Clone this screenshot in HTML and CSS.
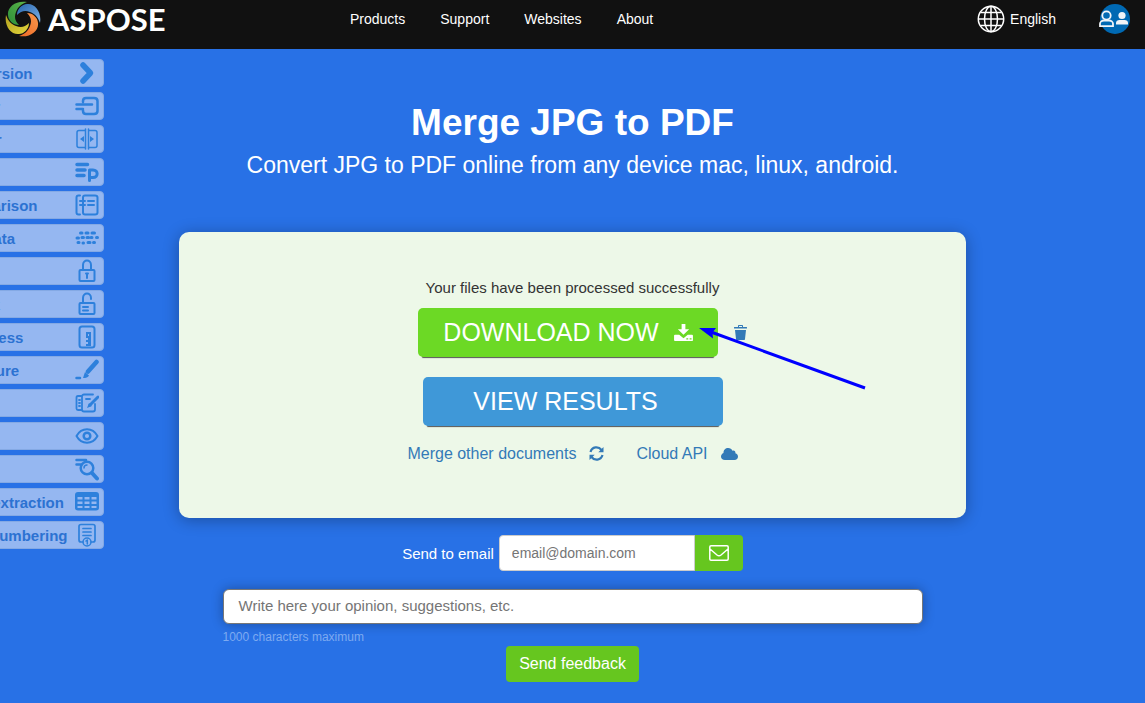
FILE: index.html
```html
<!DOCTYPE html>
<html lang="en">
<head>
<meta charset="utf-8">
<meta name="viewport" content="width=device-width, initial-scale=1">
<title>Merge JPG to PDF</title>
<link rel="stylesheet" href="styles.css">
</head>
<body>
<header class="topbar">
  <a class="brand" href="#">
    <svg class="brand-mark" viewBox="0 0 36 36" aria-hidden="true">
      <defs>
        <linearGradient id="g1" x1="0" y1="1" x2="1" y2="0"><stop offset="0" stop-color="#2c8f3a"/><stop offset="1" stop-color="#5fb548"/></linearGradient>
        <linearGradient id="g2" x1="0" y1="1" x2="1" y2="0"><stop offset="0" stop-color="#2565ad"/><stop offset="1" stop-color="#7fb2e8"/></linearGradient>
        <linearGradient id="g3" x1="0" y1="1" x2="1" y2="0"><stop offset="0" stop-color="#f9974d"/><stop offset="1" stop-color="#ee6a24"/></linearGradient>
        <linearGradient id="g4" x1="0" y1="1" x2="1" y2="0"><stop offset="0" stop-color="#e3d63c"/><stop offset="1" stop-color="#b3a11e"/></linearGradient>
      </defs>
      <path fill="url(#g1)" d="M22 1C11-1 2 6 3 14c0 5 5 10 11 10-4-4-5-8-3-13 2-5 5-8 11-10z"/>
      <path fill="url(#g2)" transform="rotate(90 18 18)" d="M22 1C11-1 2 6 3 14c0 5 5 10 11 10-4-4-5-8-3-13 2-5 5-8 11-10z"/>
      <path fill="url(#g3)" transform="rotate(180 18 18)" d="M22 1C11-1 2 6 3 14c0 5 5 10 11 10-4-4-5-8-3-13 2-5 5-8 11-10z"/>
      <path fill="url(#g4)" transform="rotate(270 18 18)" d="M22 1C11-1 2 6 3 14c0 5 5 10 11 10-4-4-5-8-3-13 2-5 5-8 11-10z"/>
    </svg>
    <span class="brand-name">ASPOSE</span>
  </a>
  <nav class="main-nav" aria-label="Main">
    <a href="#">Products</a>
    <a href="#">Support</a>
    <a href="#">Websites</a>
    <a href="#">About</a>
  </nav>
  <div class="account">
    <a class="language" href="#">
      <svg class="globe" viewBox="0 0 28 28" aria-hidden="true"><circle cx="14" cy="14" r="12.7"/><ellipse cx="14" cy="14" rx="6.5" ry="12.7"/><path d="M14 1v26M1 14h26M3.500 7.500h21M3.500 20.500h21"/></svg>
      <span>English</span>
    </a>
    <a class="profile" href="#" aria-label="Account">
      <svg viewBox="0 0 32 30" aria-hidden="true"><circle cx="17" cy="15" r="15" fill="#0069b3"/><g fill="none" stroke="#f0f4f8" stroke-width="1.800"><circle cx="8.500" cy="11.500" r="4.200"/><path d="M2 22.200v-2.400c0-2 2-3.300 4-3.300h5c2 0 4 1.300 4 3.300v2.400z"/></g><g fill="#f0f4f8"><circle cx="24" cy="11.500" r="3.600"/><path d="M18 20.500v-1.500c0-2 1.500-3 3.500-3h5c2 0 3.500 1 3.500 3v1.500z"/></g></svg>
    </a>
  </div>
</header>

<div class="page">
  <nav class="tools" aria-label="Tools">
    <a href="#"><span>Conversion</span><svg viewBox="0 0 24 24"><path d="M8 4l7.500 8L8 20" stroke-width="5.500"/></svg></a>
    <a href="#"><span>Merger</span><svg viewBox="0 0 24 24"><path d="M8 8V7c0-2 1-3 3-3h8c2 0 3.500 1 3.500 3v10c0 2-1.500 3-3.500 3h-8c-2 0-3-1-3-3v-1M1.500 10.500H17M1.500 15H8" stroke-width="2.500"/></svg></a>
    <a href="#"><span>Splitter</span><svg viewBox="0 0 24 24"><path d="M9.500 3.500H4c-1.500 0-2 .5-2 2v13c0 1.500.5 2 2 2h5.500M14.500 3.500H20c1.500 0 2 .5 2 2v13c0 1.500-.5 2-2 2h-5.500M10.500 2v20M13.500 2v20" stroke-width="1.500"/><path class="solid" d="M5 12l4-3v6zM19 12l-4-3v6z"/></svg></a>
    <a href="#"><span>Parser</span><svg viewBox="0 0 24 24"><path d="M2 4.500h10.500M2 10h8M2 15.500h7" stroke-width="3.500"/><path d="M14.500 20.500V10H18c5.500 0 5.500 7.500 0 7.500h-3" stroke-width="3"/></svg></a>
    <a href="#"><span>Comparison</span><svg viewBox="0 0 24 24"><path d="M5 2.500H3.500c-1.500 0-2 .5-2 2v15c0 1.500.5 2 2 2H5M10 2.500h10c1.500 0 2.500.5 2.500 2v15c0 1.500-1 2-2.500 2H10c-1.500 0-2-.5-2-2v-15c0-1.500.5-2 2-2zM13 8h6M13 12h6M5 8h5M5 12h5"/></svg></a>
    <a href="#"><span>Metadata</span><svg viewBox="0 0 24 24"><path d="M5.500 7h1.500M11 7h2M17 7h2.500M2 12h1.500M7 11.500h1.500M12 11.500h1.500M16 11.500h1M21.500 11.500h1M3 16.500h1M8 17h.5M13 16.500h2M18.500 16.500h1" stroke-width="3"/></svg></a>
    <a href="#"><span>Lock</span><svg viewBox="0 0 24 24"><path d="M5.500 11h13c.7 0 1 .3 1 1v9c0 .7-.3 1-1 1h-13c-.7 0-1-.3-1-1v-9c0-.7.300-1 1-1zM8 11V6c0-6 8-6 8 0v5M12 15v4M11 14.500h2"/></svg></a>
    <a href="#"><span>Unlock</span><svg viewBox="0 0 24 24"><path d="M5.500 11h13c.7 0 1 .3 1 1v9c0 .7-.3 1-1 1h-13c-.7 0-1-.3-1-1v-9c0-.7.300-1 1-1zM8 11V6c0-6 8-6 8 0v1M8 15h5M8 18.500h5"/></svg></a>
    <a href="#"><span>Compress</span><svg viewBox="0 0 24 24"><path d="M7 1.500h10c2 0 2.500 1 2.500 2.500v16c0 1.500-.5 2.500-2.500 2.500H7c-2 0-2.500-1-2.500-2.500V4c0-1.500.5-2.500 2.500-2.500z"/><path class="solid" d="M11 7h5v14h-5v-2h2v-2h-2v-2h2v-2h-2zM13 9v2h1V9z" fill-rule="evenodd"/></svg></a>
    <a href="#"><span>Signature</span><svg viewBox="0 0 24 24"><path d="M1.500 20h3.500" stroke-width="2.500"/><path d="M13 13.500l8.500-9.500" stroke-width="4.500"/><path class="solid" d="M10 14l4 3.500c-1 2-3 2.500-6 2.500z"/></svg></a>
    <a href="#"><span>Editor</span><svg viewBox="0 0 24 24"><path d="M6 5H3C1.800 5 1.500 5.500 1.500 6.500v11C1.500 18.500 2 19 3 19h3M18 3.500H9c-1 0-2 .5-2 2v13c0 1.500 1 2 2 2h9c1 0 2-.5 2-2V13M11 8h4M4 9h1M4 12h1M4 15h1" stroke-width="1.800"/><path d="M15 14l8-8" stroke-width="3"/><path class="solid" d="M12 17l2-5 3 3z"/></svg></a>
    <a href="#"><span>Viewer</span><svg viewBox="0 0 24 24"><path d="M1.500 12c5-9 16-9 21 0-5 9-16 9-21 0z"/><circle cx="12" cy="12" r="3.300" stroke-width="2.500"/></svg></a>
    <a href="#"><span>Search</span><svg viewBox="0 0 24 24"><path d="M1.500 3H11M1.500 7.500H6" stroke-width="2.500"/><circle cx="12" cy="11" r="6.300" stroke-width="2.500"/><path d="M17 16l5 5.500" stroke-width="4"/><path d="M9 11c0-2 1-3 3-3" stroke-width="1.500"/></svg></a>
    <a href="#"><span>Table extraction</span><svg viewBox="0 0 24 24"><path class="solid" fill-rule="evenodd" d="M3 2h18c2 0 3 1 3 3v13c0 1.500-1 2.500-3 2.500H3c-2 0-3-1-3-2.500V5c0-2 1-3 3-3zM2.500 7v2.500h5V7zM9.500 7v2.500h5V7zM16.500 7v2.500h5V7zM2.500 11.500V14h5v-2.500zM9.500 11.500V14h5v-2.500zM16.500 11.500V14h5v-2.500zM2.500 16v2h5v-2zM9.500 16v2h5v-2zM16.500 16v2h5v-2z"/></svg></a>
    <a href="#"><span>Page numbering</span><svg viewBox="0 0 24 24"><path d="M8 19H6c-1.500 0-2-1-2-2V3.500C4 2 5 1.500 6 1.500h12c1 0 2 .5 2 2V17c0 1-.5 2-2 2h-2M8 5.500h8M8 9h8M8 12.500h8" stroke-width="1.700"/><circle cx="12" cy="19" r="4" stroke-width="1.500"/><path d="M11 18l1.300-1v4" stroke-width="1.500"/></svg></a>
  </nav>

  <main class="content">
    <h1>Merge JPG to PDF</h1>
    <p class="lead">Convert JPG to PDF online from any device mac, linux, android.</p>

    <section class="result">
      <p class="status">Your files have been processed successfully</p>
      <div class="download-row">
        <button class="action download" type="button">DOWNLOAD NOW
          <svg viewBox="0 0 20 18" aria-hidden="true"><path fill="#fff" fill-rule="evenodd" d="M8 0h4v5.500h4L10 11.500 4 5.500h4zM1 11.500h4.500L10 15l4.500-3.500H19c.7 0 1 .3 1 1V17c0 .7-.3 1-1 1H1c-.7 0-1-.3-1-1v-4.500c0-.7.3-1 1-1zM13 15v1.300h2V15zM16.500 15v1.300h2V15z"/></svg>
        </button>
        <button class="trash" type="button" aria-label="Delete file">
          <svg viewBox="0 0 13 15" aria-hidden="true"><path fill="#337ab7" fill-rule="evenodd" d="M4 2V1c0-.6.4-1 1-1h3c.6 0 1 .4 1 1v1h3.500c.5 0 .5.500.5 1v.5H0V3c0-.5 0-1 .5-1zM5 1v1h3V1zM1 5h11l-1 9c0 .6-.4 1-1 1H3c-.6 0-1-.4-1-1z"/></svg>
        </button>
      </div>
      <button class="action view" type="button">VIEW RESULTS</button>
      <div class="links">
        <a href="#">Merge other documents
          <svg class="refresh" viewBox="0 0 15 15" aria-hidden="true"><path fill="none" stroke="#337ab7" stroke-width="2.200" d="M1.500 6C3 .5 9.500 0 12.500 4M13.500 9C12 14.500 5.500 15 2.500 11"/><path fill="#337ab7" d="M14.500 1v5.200H9.300zM.5 14V8.800h5.200z"/></svg></a>
        <a href="#">Cloud API
          <svg class="cloud" viewBox="0 0 17 12" aria-hidden="true"><path fill="#337ab7" d="M4 12C1.500 12 0 10.500 0 8.500 0 7 1 5.500 2.500 5 2.300 2 4.500 0 7.200 0c2 0 3.500 1 4.200 2.700 1.700-.7 3.300.5 3 2.500C16 5.500 17 7 17 8.500c0 2-1.500 3.500-3.500 3.500z"/></svg></a>
      </div>
      <svg class="pointer" viewBox="0 0 168 64" aria-hidden="true"><path d="M12 6l154 56" stroke="#00f" stroke-width="3"/><path d="M0 2l17 0-3.500 4.500.5 6z" fill="#00f"/></svg>
    </section>

    <form class="email">
      <label for="email">Send to email</label>
      <input id="email" type="email" placeholder="email@domain.com">
      <button type="button" aria-label="Send"><svg viewBox="0 0 20 16" aria-hidden="true"><path fill="none" stroke="#fff" stroke-width="1.500" d="M2 .8h16c.7 0 1.200.5 1.200 1.200v12c0 .7-.5 1.200-1.200 1.200H2c-.7 0-1.200-.5-1.200-1.200V2C.8 1.300 1.300.8 2 .8zM1 4l7 6c1.300 1 2.700 1 4 0l7-6"/></svg></button>
    </form>

    <form class="feedback">
      <textarea id="opinion" rows="1" maxlength="1000" aria-label="Feedback" placeholder="Write here your opinion, suggestions, etc."></textarea>
      <label for="opinion">1000 characters maximum</label>
      <button type="button">Send feedback</button>
    </form>
  </main>
</div>
</body>
</html>
```

FILE: styles.css
```css
* { box-sizing: border-box; }

body {
  margin: 0;
  min-height: 100vh;
  background: #2871e6;
  color: #fff;
  font-family: "Liberation Sans", Arial, sans-serif;
  overflow-x: hidden;
}

a { color: inherit; text-decoration: none; }
button, input, textarea { font-family: inherit; }
button { border: 0; color: #fff; cursor: pointer; }
svg { display: block; flex: none; }

.topbar {
  display: grid;
  grid-template-columns: 350px 1fr auto;
  height: 49px;
  padding: 0 15px 12px 0;
  background: #111;
  font-size: 14px;
  align-items: center;
}
.brand { display: flex; align-items: center; gap: 7px; padding-left: 5px; }
.brand-mark { width: 36px; height: 36px; }
.brand-name { font-family: Lato, sans-serif; font-size: 31px; font-weight: 700; line-height: 36px; }
.main-nav { display: flex; gap: 35px; }
.account { display: flex; align-items: center; gap: 42px; }
.language { display: flex; align-items: center; gap: 5px; }
.globe { width: 28px; height: 28px; fill: none; stroke: #fff; stroke-width: 1.5; }
.profile svg { width: 32px; height: 30px; }

.page { position: relative; }

.tools {
  position: absolute;
  top: 10px;
  left: -66px;
  width: 170px;
  display: grid;
  gap: 5px;
}
.tools a {
  display: flex;
  align-items: center;
  justify-content: space-between;
  height: 28px;
  padding: 0 4px 0 15px;
  border: 1px solid #84a9e4;
  border-radius: 4px;
  background: #95b7f1;
  color: #2c72d2;
  font-size: 15px;
  font-weight: 700;
  white-space: nowrap;
}
.tools svg {
  width: 24px;
  height: 24px;
  fill: none;
  stroke: #2d80dc;
  stroke-width: 2;
  stroke-linecap: round;
  stroke-linejoin: round;
}
.tools .solid { fill: #2d80dc; stroke: none; }

.content {
  display: flex;
  flex-direction: column;
  align-items: center;
  padding: 52px 179px 20px;
}
h1 { margin: 0; font-size: 37px; line-height: 44px; }
.lead { margin: 5px 0 51px; font-size: 23px; line-height: 31px; text-align: center; }

.result {
  position: relative;
  display: flex;
  flex-direction: column;
  align-items: center;
  width: 100%;
  padding: 46px 20px 54px;
  border-radius: 10px;
  background: #edf8e8;
  box-shadow: 0 2px 16px rgba(0, 0, 0, 0.3);
}
.status { margin: 0 0 10px; color: #333; font-size: 15px; line-height: 20px; }
.download-row { display: flex; align-items: center; gap: 16px; padding-left: 20px; }
.action {
  display: flex;
  align-items: center;
  justify-content: center;
  gap: 15px;
  width: 300px;
  height: 49px;
  padding: 0;
  border-radius: 5px;
  font-size: 25px;
  box-shadow: 0 5px 1px -4px #555;
}
.download { background: #6cd925; }
.download svg { width: 19px; height: 17px; }
.view { margin-top: 20px; padding-right: 14px; background: #3f98d8; }
.trash { padding: 0; background: none; }
.trash svg { width: 13px; height: 15px; }
.links { display: flex; gap: 32px; margin-top: 17px; color: #337ab7; font-size: 16px; line-height: 21px; }
.links a { display: flex; align-items: center; gap: 13px; }
.refresh { width: 15px; height: 15px; }
.cloud { width: 17px; height: 12px; }
.pointer {
  position: absolute;
  top: 94px;
  left: calc(50% + 126px);
  width: 168px;
  height: 64px;
}

.email { display: flex; align-items: center; margin-top: 17px; font-size: 15px; }
.email label { margin-right: 5px; }
.email input {
  width: 196px;
  height: 36px;
  padding: 0 12px;
  border: 1px solid #ccc;
  border-radius: 4px 0 0 4px;
  font-size: 14px;
}
.email button {
  display: grid;
  place-items: center;
  width: 48px;
  height: 36px;
  border-radius: 0 4px 4px 0;
  background: #66c61f;
}
.email button svg { width: 20px; height: 16px; }

.feedback {
  display: flex;
  flex-direction: column;
  width: 100%;
  max-width: 700px;
  margin-top: 18px;
}
.feedback textarea {
  display: block;
  width: 100%;
  height: 35px;
  padding: 7px 15px;
  border: 1px solid #777;
  border-radius: 6px;
  font-size: 15px;
  line-height: 18px;
  resize: none;
  overflow: hidden;
  box-shadow: 0 0 12px rgba(0, 0, 0, 0.3);
}
.feedback label { margin: 5px 0 1px; color: #7eaaf0; font-size: 12px; line-height: 16px; }
.feedback button {
  align-self: center;
  height: 36px;
  padding: 0 13px;
  border-radius: 4px;
  background: #66c61f;
  font-size: 16px;
}
::placeholder { color: #757575; opacity: 1; }
```
